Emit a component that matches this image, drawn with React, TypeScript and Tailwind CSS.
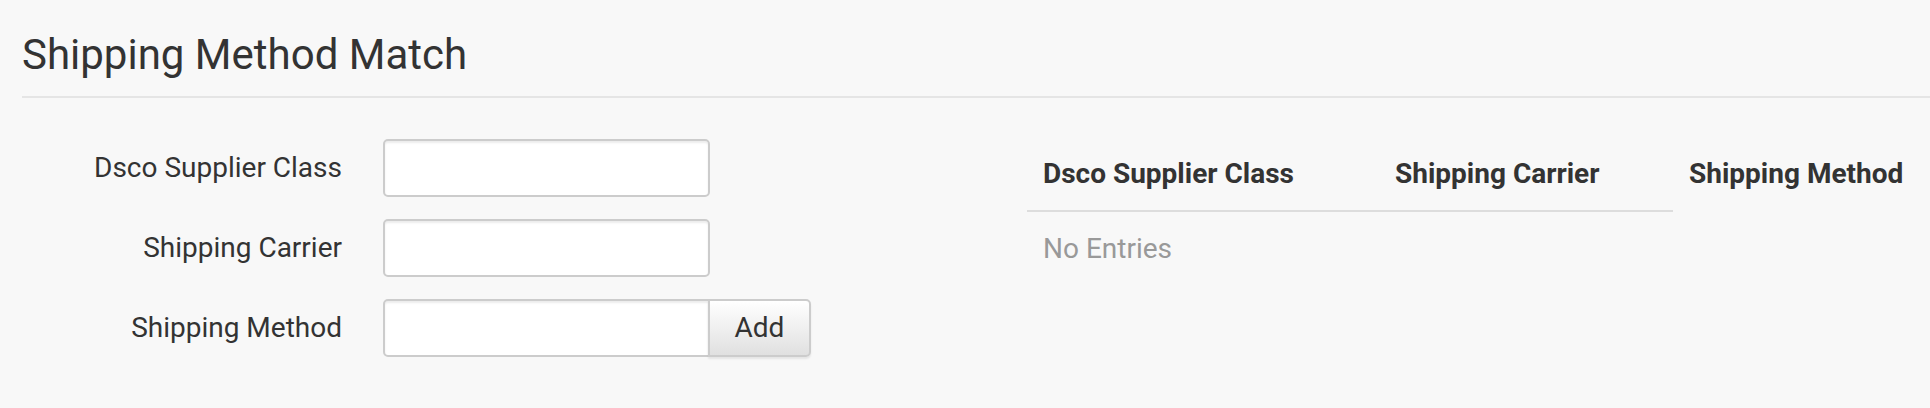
import React from "react";

const labelCls =
  "w-[320px] shrink-0 text-right text-[28px] leading-[40px] text-[#333333]";
const inputCls =
  "h-[58px] w-[327px] shrink-0 rounded-[5px] border-2 border-[#cccccc] bg-white shadow-[inset_0_2px_2px_rgba(0,0,0,0.075)] outline-none";

function Row({ label, children }: { label: string; children: React.ReactNode }) {
  return (
    <div className="flex items-center">
      <label className={labelCls}>{label}</label>
      <div className="ml-[41px] flex">{children}</div>
    </div>
  );
}

export default function App() {
  return (
    <div
      className="h-[408px] w-full overflow-hidden bg-[#f8f8f8] text-[#333333]"
      style={{ fontFamily: "Roboto, 'Noto Sans', sans-serif" }}
    >
      <div className="pl-[22px]">
        <div className="border-b-2 border-[#e5e5e5] pt-[32px] pb-[18px]">
          <h1 className="text-[42px] leading-[46px] font-normal">Shipping Method Match</h1>
        </div>
        <div className="flex items-start pt-[41px]">
          <div className="flex flex-col gap-[22px]">
            <Row label="Dsco Supplier Class">
              <input className={inputCls} type="text" />
            </Row>
            <Row label="Shipping Carrier">
              <input className={inputCls} type="text" />
            </Row>
            <Row label="Shipping Method">
              <input className={`${inputCls} rounded-r-none`} type="text" />
              <button className="-ml-[2px] h-[58px] w-[103px] rounded-r-[5px] border-2 border-[#cccccc] bg-[linear-gradient(to_bottom,#ffffff,#e0e0e0)] text-[28px] leading-[40px] text-[#333333] shadow-[0_2px_2px_rgba(0,0,0,0.08)]">
                Add
              </button>
            </Row>
          </div>
          <div className="-mt-px ml-[216px]">
            <div className="flex">
              <div className="flex border-b-2 border-[#dddddd]">
                <div className="w-[352px] px-[16px] py-[16px] text-[28px] leading-[40px] font-bold">
                  Dsco Supplier Class
                </div>
                <div className="w-[294px] px-[16px] py-[16px] text-[28px] leading-[40px] font-bold">
                  Shipping Carrier
                </div>
              </div>
              <div className="px-[16px] py-[16px] text-[28px] leading-[40px] font-bold">
                Shipping Method
              </div>
            </div>
            <div className="px-[16px] pt-[17px] text-[28px] leading-[40px] text-[#999999]">
              No Entries
            </div>
          </div>
        </div>
      </div>
    </div>
  );
}
